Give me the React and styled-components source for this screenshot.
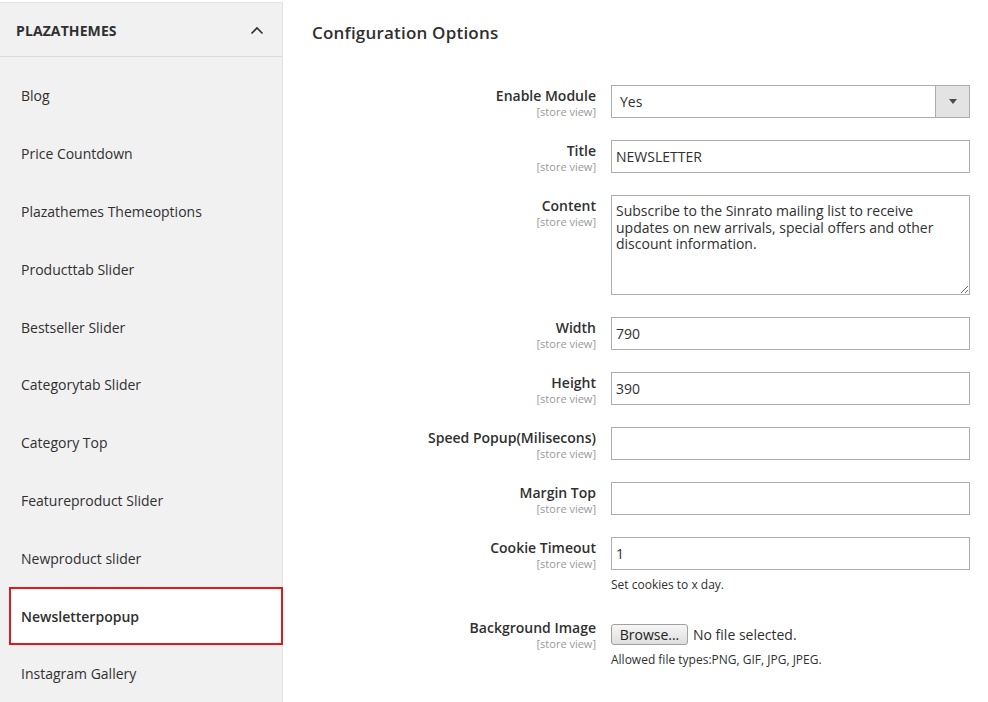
import React from 'react';
import styled, { createGlobalStyle } from 'styled-components';

const GlobalStyle = createGlobalStyle`
  html, body {
    margin: 0;
    padding: 0;
    background: #ffffff;
    font-family: "Open Sans", "Noto Sans", sans-serif;
    color: #303030;
  }
  * { box-sizing: border-box; }
`;

const menuItems = [
  'Blog',
  'Price Countdown',
  'Plazathemes Themeoptions',
  'Producttab Slider',
  'Bestseller Slider',
  'Categorytab Slider',
  'Category Top',
  'Featureproduct Slider',
  'Newproduct slider',
  'Newsletterpopup',
  'Instagram Gallery',
];

const fields = [
  { label: 'Enable Module', type: 'select', value: 'Yes' },
  { label: 'Title', type: 'text', value: 'NEWSLETTER' },
  {
    label: 'Content',
    type: 'textarea',
    value:
      'Subscribe to the Sinrato mailing list to receive updates on new arrivals, special offers and other discount information.',
  },
  { label: 'Width', type: 'text', value: '790' },
  { label: 'Height', type: 'text', value: '390' },
  { label: 'Speed Popup(Milisecons)', type: 'text', value: '' },
  { label: 'Margin Top', type: 'text', value: '' },
  { label: 'Cookie Timeout', type: 'text', value: '1', note: 'Set cookies to x day.' },
];

const App = () => {
  return (
    <>
      <GlobalStyle />
      <Page>
        <Sidebar>
          <SidebarHeader>
            <HeaderTitle>PLAZATHEMES</HeaderTitle>
            <svg width="14" height="9" viewBox="0 0 14 9">
              <path d="M1.5 7.5 L7 2 L12.5 7.5" fill="none" stroke="#303030" strokeWidth="1.6" />
            </svg>
          </SidebarHeader>
          <Menu>
            {menuItems.map((item) => (
              <MenuItem key={item} $active={item === 'Newsletterpopup'}>
                {item}
              </MenuItem>
            ))}
          </Menu>
        </Sidebar>

        <Content>
          <Title>Configuration Options</Title>
          <Form>
            {fields.map((f) => (
              <Row key={f.label}>
                <LabelCol>
                  <Label>{f.label}</Label>
                  <Scope>[store view]</Scope>
                </LabelCol>
                <ValueCol>
                  {f.type === 'select' && (
                    <Select>
                      <SelectValue>{f.value}</SelectValue>
                      <SelectArrow>
                        <svg width="8" height="5" viewBox="0 0 8 5">
                          <path d="M0 0 L8 0 L4 5 Z" fill="#514943" />
                        </svg>
                      </SelectArrow>
                    </Select>
                  )}
                  {f.type === 'text' && <TextInput defaultValue={f.value} />}
                  {f.type === 'textarea' && <TextArea defaultValue={f.value} />}
                  {f.note && <Note>{f.note}</Note>}
                </ValueCol>
              </Row>
            ))}
            <Row>
              <LabelCol $file>
                <Label>Background Image</Label>
                <Scope>[store view]</Scope>
              </LabelCol>
              <ValueCol>
                <FileLine>
                  <BrowseButton type="button">Browse...</BrowseButton>
                  <FileName>No file selected.</FileName>
                </FileLine>
                <Note>Allowed file types:PNG, GIF, JPG, JPEG.</Note>
              </ValueCol>
            </Row>
          </Form>
        </Content>
      </Page>
    </>
  );
};

export default App;

const Page = styled.div`
  display: flex;
  width: 988px;
  height: 702px;
  overflow: hidden;
`;

const Sidebar = styled.aside`
  width: 283px;
  flex-shrink: 0;
  margin-top: 2px;
  background: #f1f1f1;
  border-top: 1px solid #e3e3e3;
  border-right: 1px solid #e3e3e3;
  display: flex;
  flex-direction: column;
`;

const SidebarHeader = styled.div`
  height: 54px;
  flex-shrink: 0;
  display: flex;
  align-items: center;
  justify-content: space-between;
  padding: 1px 18px 0 16px;
  border-bottom: 1px solid #dcdcdc;
`;

const HeaderTitle = styled.span`
  font-size: 14px;
  font-weight: 700;
  color: #303030;
  letter-spacing: 0.1px;
`;

const Menu = styled.div`
  display: flex;
  flex-direction: column;
  padding-top: 10px;
`;

const MenuItem = styled.div`
  height: 57.8px;
  flex-shrink: 0;
  display: flex;
  align-items: center;
  margin-left: 9px;
  margin-right: ${(p) => (p.$active ? '-1px' : '0')};
  padding-left: ${(p) => (p.$active ? '10px' : '12px')};
  font-size: 14px;
  color: #303030;
  font-weight: ${(p) => (p.$active ? 600 : 400)};
  background: ${(p) => (p.$active ? '#ffffff' : 'transparent')};
  border: ${(p) => (p.$active ? '2px solid #e3171c' : 'none')};
`;

const Content = styled.main`
  flex: 1;
  padding: 21px 18px 0 29px;
`;

const Title = styled.h2`
  margin: 0 0 40px;
  font-size: 17px;
  line-height: 24px;
  font-weight: 600;
  color: #303030;
  letter-spacing: 0.2px;
`;

const Form = styled.div`
  display: flex;
  flex-direction: column;
`;

const Row = styled.div`
  display: flex;
  gap: 15px;
  margin-bottom: 22px;
`;

const LabelCol = styled.div`
  width: 284px;
  flex-shrink: 0;
  text-align: right;
  padding-top: 1px;
  margin-top: ${(p) => (p.$file ? '-3px' : '0')};
  display: flex;
  flex-direction: column;
`;

const Label = styled.span`
  font-size: 14px;
  line-height: 19px;
  font-weight: 600;
  color: #303030;
`;

const Scope = styled.span`
  font-size: 11px;
  line-height: 13px;
  color: #999999;
`;

const ValueCol = styled.div`
  width: 359px;
  display: flex;
  flex-direction: column;
`;

const Select = styled.div`
  height: 33px;
  display: flex;
  border: 1px solid #adadad;
  background: #ffffff;
`;

const SelectValue = styled.span`
  flex: 1;
  display: flex;
  align-items: center;
  padding-left: 8px;
  font-size: 14px;
  color: #303030;
`;

const SelectArrow = styled.span`
  width: 34px;
  display: flex;
  align-items: center;
  justify-content: center;
  background: #e3e3e3;
  border-left: 1px solid #adadad;
`;

const TextInput = styled.input`
  height: 33px;
  width: 100%;
  border: 1px solid #adadad;
  padding: 0 4px;
  font-family: "Open Sans", "Noto Sans", sans-serif;
  font-size: 14px;
  color: #303030;
  outline: none;
`;

const TextArea = styled.textarea`
  height: 100px;
  width: 100%;
  border: 1px solid #adadad;
  padding: 7px 4px;
  font-family: "Open Sans", "Noto Sans", sans-serif;
  font-size: 14px;
  line-height: 16.5px;
  color: #303030;
  resize: vertical;
  outline: none;
`;

const Note = styled.div`
  margin-top: 7px;
  margin-bottom: 5px;
  font-size: 12px;
  line-height: 16px;
  color: #303030;
`;

const FileLine = styled.div`
  display: flex;
  align-items: center;
  gap: 5px;
  margin-top: 4px;
`;

const BrowseButton = styled.button`
  height: 21px;
  width: 77px;
  padding: 0;
  border: 1px solid #a0a0a0;
  border-radius: 3px;
  background: linear-gradient(#f6f6f6, #dedede);
  font-family: "Open Sans", "Noto Sans", sans-serif;
  font-size: 14px;
  color: #222222;
`;

const FileName = styled.span`
  font-size: 14px;
  color: #303030;
`;
